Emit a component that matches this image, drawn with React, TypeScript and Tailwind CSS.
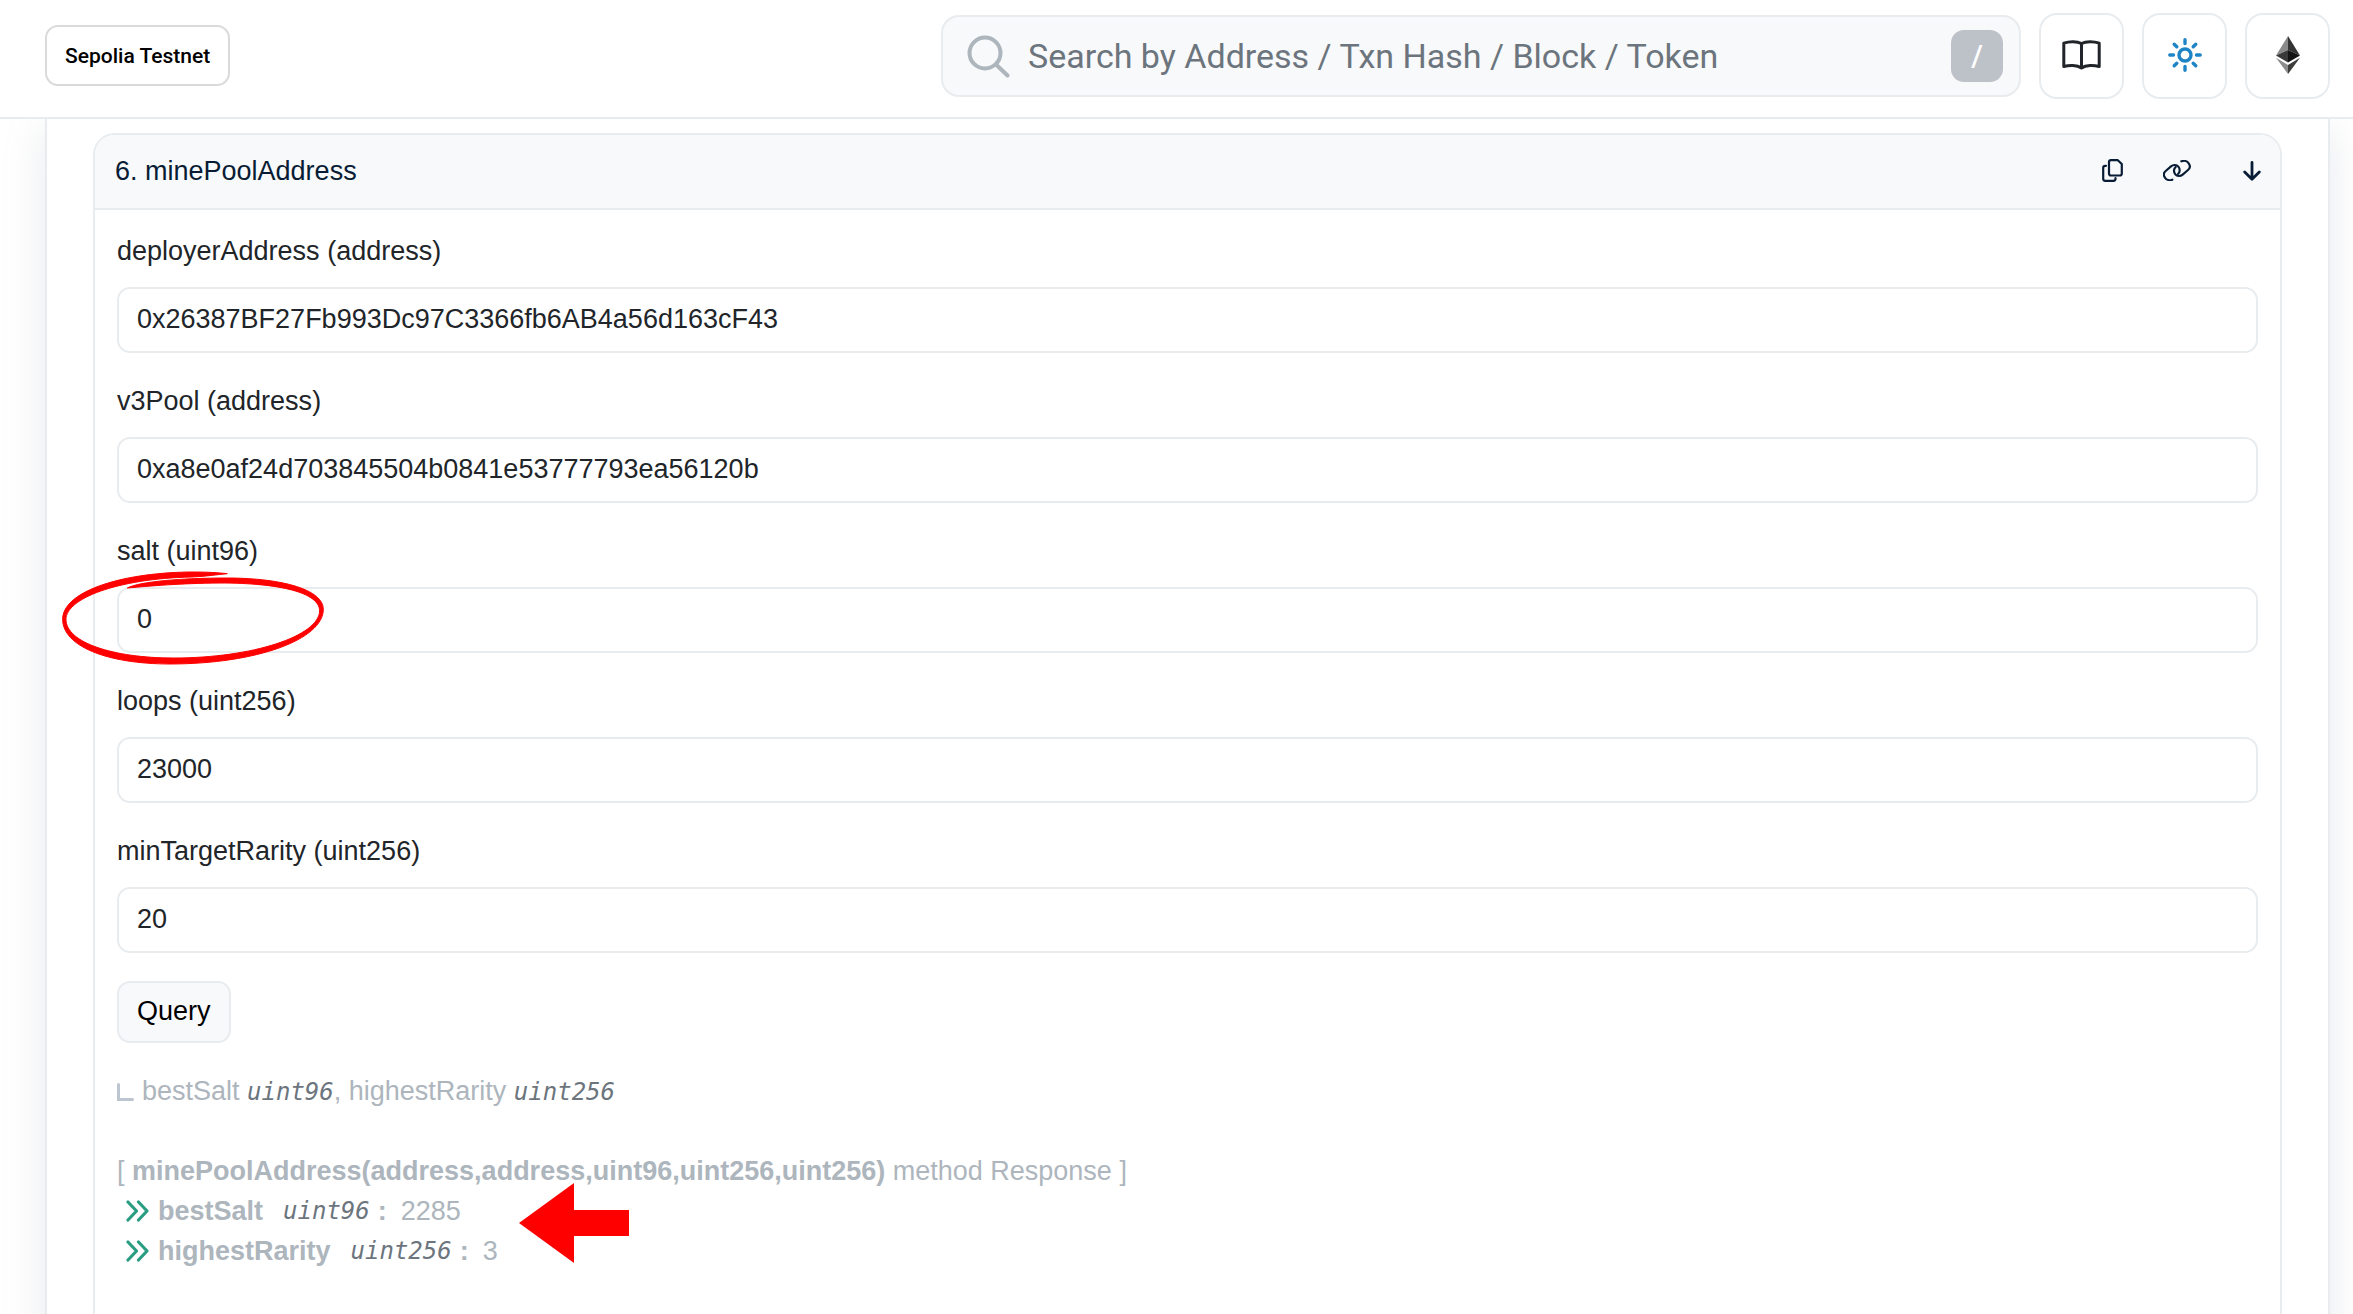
import React from 'react'

const fields = [
    { name: 'deployerAddress', type: 'address', value: '0x26387BF27Fb993Dc97C3366fb6AB4a56d163cF43' },
    { name: 'v3Pool', type: 'address', value: '0xa8e0af24d703845504b0841e53777793ea56120b' },
    { name: 'salt', type: 'uint96', value: '0', circled: true },
    { name: 'loops', type: 'uint256', value: '23000' },
    { name: 'minTargetRarity', type: 'uint256', value: '20' },
]

const results = [
    { name: 'bestSalt', type: 'uint96', value: '2285' },
    { name: 'highestRarity', type: 'uint256', value: '3' },
]

const SearchIcon = () => (
    <svg width="43" height="43" viewBox="0 0 43 43" fill="none" stroke="#adb5bd" strokeWidth="4" strokeLinecap="round">
        <circle cx="18" cy="18" r="15.5" />
        <path d="M29 29.5 40.5 40.5" />
    </svg>
)

const BookIcon = () => (
    <svg width="39" height="30" viewBox="0 0 39 30" fill="none" stroke="#212529" strokeWidth="3" strokeLinejoin="round">
        <path d="M19.500 3.500C15 1 7 1.200 1.800 3.200v23.300C7 25 15 24.600 19.500 28 24 24.600 32 25 37.200 26.500V3.200C32 1.200 24 1 19.500 3.500z" />
        <path d="M19.500 3.500V28" />
    </svg>
)

const SunIcon = () => (
    <svg width="34" height="34" viewBox="0 0 34 34" fill="none" stroke="#1e84c6" strokeWidth="3.4" strokeLinecap="round">
        <circle cx="17" cy="17" r="6" />
        <path d="M17 1.800v3.700M17 28.500v3.700M1.800 17h3.700M28.500 17h3.700M6.200 6.200l2.600 2.600M25.200 25.200l2.600 2.600M6.200 27.800l2.600-2.600M25.200 8.800l2.600-2.600" />
    </svg>
)

const EthIcon = () => (
    <svg width="24" height="38" viewBox="0 0 24 38">
        <path d="M12 0 0 19.5 12 14z" fill="#8a8a8a" />
        <path d="M12 0v14l12 5.5z" fill="#343434" />
        <path d="M0 19.5 12 14v12.5z" fill="#393939" />
        <path d="M24 19.5 12 14v12.5z" fill="#141414" />
        <path d="M0 21.8 12 29v9z" fill="#8c8c8c" />
        <path d="M24 21.8 12 29v9z" fill="#3c3c3b" />
    </svg>
)

const CopyIcon = () => (
    <svg width="21" height="23" viewBox="0 0 21 23" fill="none" stroke="#081d35" strokeWidth="2.2" strokeLinecap="round" strokeLinejoin="round">
        <path d="M9 1.200h6.800L19.800 5v9.500a2 2 0 0 1-2 2H9a2 2 0 0 1-2-2V3.200a2 2 0 0 1 2-2z" />
        <path d="M4 6.800H3.200a2 2 0 0 0-2 2v11a2 2 0 0 0 2 2h8.300a2 2 0 0 0 2-2v-.6" />
    </svg>
)

const ChainIcon = () => (
    <svg width="28" height="21" viewBox="0 0 84 63" fill="none" stroke="#081d35" strokeWidth="6.5" strokeLinecap="round">
        <path d="M28 59C20 62 10 60 6 53C1 46 2 38 8 33L24 19C31 13 41 14 46 20C52 27 51 37 45 42" />
        <path d="M55 4C63 1 73 3 77 10C82 17 81 25 75 30L59 44C52 50 42 49 37 43C31 36 32 26 38 21" />
    </svg>
)

const ArrowDownIcon = () => (
    <svg width="18" height="20" viewBox="0 0 18 20" fill="none" stroke="#081d35" strokeWidth="2.8" strokeLinecap="round" strokeLinejoin="round">
        <path d="M9 1.500v16.800M1.700 11 9 18.300 16.300 11" />
    </svg>
)

const ChevronsIcon = () => (
    <svg width="23" height="22" viewBox="0 0 23 22" fill="none" stroke="#2a9d82" strokeWidth="3.2" strokeLinecap="round" strokeLinejoin="round">
        <path d="M2 2l8.500 9L2 20M12.500 2l8.500 9-8.500 9" />
    </svg>
)

const HeaderButton = ({ label, children }: { label: string; children: React.ReactNode }) => (
    <button
        type="button"
        aria-label={label}
        className="flex h-[86px] w-[85px] items-center justify-center rounded-[18px] border-2 border-[#e9ecef] bg-white pb-0.5"
    >
        {children}
    </button>
)

const TypeName = ({ children }: { children: string }) => (
    <i className="font-['DejaVu_Sans_Mono',monospace] text-2xl leading-10 text-[#6c757d]">{children}</i>
)

const Header: React.FC = () => {
    return (
        <header className="relative z-10 flex h-[119px] items-start justify-between border-b-2 border-[#e9ecef] bg-white pr-[23px] pl-[45px] font-[Roboto,sans-serif]">
            <button
                type="button"
                className="mt-[25px] h-[61px] rounded-[13px] border-2 border-[#d9dadb] px-[18px] text-[21px] font-medium text-black"
            >
                Sepolia Testnet
            </button>
            <div className="mt-[13px] flex items-center gap-[18px]">
                <label className="flex h-[82px] w-[1080px] items-center gap-[18px] rounded-[18px] border-2 border-[#e9ecef] bg-[#f8f9fa] pr-4 pl-6">
                    <SearchIcon />
                    <input
                        type="text"
                        aria-label="Search"
                        placeholder="Search by Address / Txn Hash / Block / Token"
                        className="min-w-0 flex-1 bg-transparent text-[34px] outline-none placeholder:text-[#6c757d]"
                    />
                    <kbd className="flex h-[52px] w-[52px] items-center justify-center rounded-[13px] bg-[#bdc1c8] font-[Roboto,sans-serif] text-[30px] font-medium text-white">
                        /
                    </kbd>
                </label>
                <HeaderButton label="Docs">
                    <BookIcon />
                </HeaderButton>
                <HeaderButton label="Theme">
                    <SunIcon />
                </HeaderButton>
                <HeaderButton label="Network">
                    <EthIcon />
                </HeaderButton>
            </div>
        </header>
    )
}

const App: React.FC = () => {
    return (
        <div className="h-screen overflow-hidden bg-white font-['Liberation_Sans',sans-serif] text-[27px] leading-10 text-[#212529]">
            <Header />
            <main className="mr-[23px] ml-[45px] min-h-full border-x-2 border-[#e9ecef] px-[46px] pt-[14px] shadow-[0_10px_40px_rgba(140,152,164,0.2)]">
                <section className="min-h-screen rounded-t-[22px] border-2 border-[#e9ecef]">
                    {/* Method title */}
                    <div className="flex h-[75px] items-center justify-between rounded-t-[20px] border-b-2 border-[#e9ecef] bg-[#f8f9fa] pr-[19px] pb-0.5 pl-5 text-[#081d35]">
                        <h2>6. minePoolAddress</h2>
                        <div className="flex items-center">
                            <button type="button" aria-label="Copy method" className="mr-10">
                                <CopyIcon />
                            </button>
                            <button type="button" aria-label="Copy permalink" className="mr-[52px]">
                                <ChainIcon />
                            </button>
                            <button type="button" aria-label="Collapse">
                                <ArrowDownIcon />
                            </button>
                        </div>
                    </div>

                    <form className="px-[22px] pt-[21px]">
                        {fields.map((field) => (
                            <div key={field.name} className="relative mb-7">
                                <label htmlFor={field.name} className="mb-4 block">
                                    {field.name} ({field.type})
                                </label>
                                <input
                                    id={field.name}
                                    type="text"
                                    defaultValue={field.value}
                                    className="block h-[66px] w-full rounded-[13px] border-2 border-[#e9ecef] bg-white px-[18px] pb-0.5 outline-none"
                                />
                                {field.circled && (
                                    <svg
                                        className="pointer-events-none absolute -bottom-3 -left-[55px]"
                                        width="262"
                                        height="94"
                                        viewBox="66 155 786 282"
                                        fill="#fe0000"
                                        stroke="#fe0000"
                                        strokeWidth="3"
                                    >
                                        <path d="M562 163C520 158 480 158 445 158C230 162 68 220 68 300C68 380 200 434 390 434C650 434 850 360 850 270C850 212 730 176 560 176C430 176 300 186 262 206C330 200 420 192 540 191C720 191 839 220 839 275C836 350 640 416 400 416C220 416 78 370 78 300C78 238 230 178 455 173C500 171 530 166 562 163Z" />
                                    </svg>
                                )}
                            </div>
                        ))}
                        <button
                            type="button"
                            className="h-[62px] rounded-[13px] border-2 border-[#e9ecef] bg-[#f8f9fa] px-[18px] pb-0.5 text-black"
                        >
                            Query
                        </button>
                    </form>

                    {/* Query output */}
                    <div className="relative px-[22px] pt-7 text-[#adb5bd]">
                        <p className="flex items-center whitespace-pre">
                            <svg className="mr-2" width="17" height="18" viewBox="0 0 17 18" fill="none" stroke="#bdc5d1" strokeWidth="3" strokeLinecap="round">
                                <path d="M1.500 1.500v15h14" />
                            </svg>
                            <span>
                                bestSalt <TypeName>uint96</TypeName>, highestRarity <TypeName>uint256</TypeName>
                            </span>
                        </p>
                        <p className="mt-[39px]">
                            [ <b>minePoolAddress(address,address,uint96,uint256,uint256)</b> method Response ]
                        </p>
                        {results.map((result) => (
                            <p key={result.name} className="flex items-center pl-[9px]">
                                <ChevronsIcon />
                                <b className="mr-5 ml-[9px]">{result.name}</b>
                                <TypeName>{result.type}</TypeName>
                                <b className="ml-2">:</b>
                                <span className="ml-3.5">{result.value}</span>
                            </p>
                        ))}
                        <svg className="pointer-events-none absolute bottom-2 left-[424px]" width="110" height="80" viewBox="0 0 110 80" fill="#fe0000">
                            <path d="M0 40 55 0v27h55v26H55v27z" />
                        </svg>
                    </div>
                </section>
            </main>
        </div>
    )
}

export default App
